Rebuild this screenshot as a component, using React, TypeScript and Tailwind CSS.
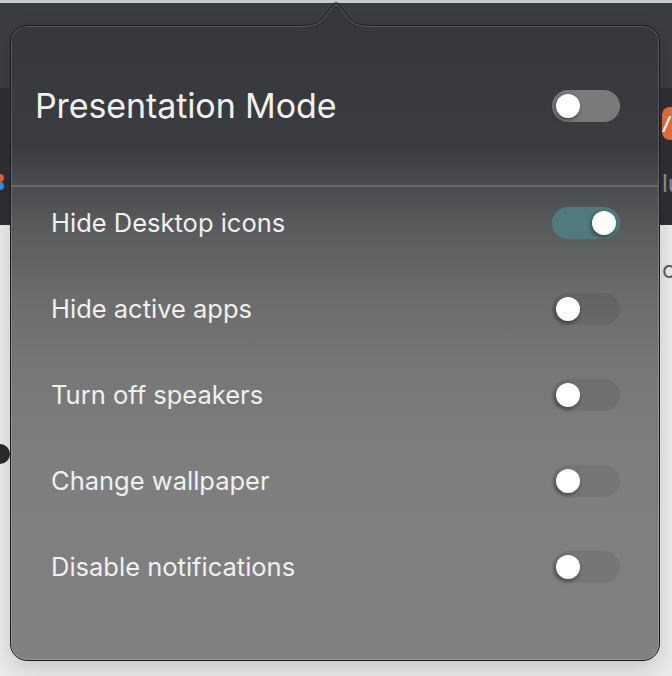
import React, { useState } from 'react';

// One settings row in the popover
interface Option {
  label: string;
  on: boolean;
}

const initialOptions: Option[] = [
  { label: 'Hide Desktop icons', on: true },
  { label: 'Hide active apps', on: false },
  { label: 'Turn off speakers', on: false },
  { label: 'Change wallpaper', on: false },
  { label: 'Disable notifications', on: false },
];

const Toggle = ({ on, header, onClick }: { on: boolean; header?: boolean; onClick: () => void }) => {
  const track = on ? 'bg-[#4f7b7e]' : header ? 'bg-[#7a7a7a]' : 'bg-black/[0.07]';
  return (
    <button
      onClick={onClick}
      className={`flex items-center w-[68px] h-[32px] rounded-full px-[4px] shrink-0 ${track} ${on ? 'justify-end' : 'justify-start'}`}
    >
      <span className="w-[24px] h-[24px] rounded-full bg-white shadow-[-1px_2px_4px_rgba(0,0,0,0.45)]" />
    </button>
  );
};

const App = () => {
  const [presentation, setPresentation] = useState(false);
  const [options, setOptions] = useState<Option[]>(initialOptions);

  const flip = (index: number) => {
    setOptions(options.map((o, i) => (i === index ? { ...o, on: !o.on } : o)));
  };

  return (
    <div className="relative w-[672px] h-[676px] overflow-hidden bg-[#ececec] font-['Inter','Noto_Sans',sans-serif]">
      {/* window behind the popover */}
      <div className="h-[3px] bg-[#c6ccd3]" />
      <div className="h-[85px] bg-[#3c3d40]" />
      <div className="h-[137px] bg-[#2f3033]" />

      {/* bits of the window peeking out at the edges */}
      <div className="absolute left-[-6px] top-[174px] w-[10px] h-[8px] rounded-full bg-[#e0603c]" />
      <div className="absolute left-[-6px] top-[182px] w-[10px] h-[8px] rounded-full bg-[#3a8fe0]" />
      <div className="absolute left-[-12px] top-[444px] w-[22px] h-[20px] rounded-full bg-[#2a2a2a]" />
      <div className="absolute left-[662px] top-[107px] w-[30px] h-[33px] rounded-[8px] bg-[#e2703d] flex items-center justify-start pl-[1px]">
        <span className="text-white text-[18px] font-bold italic leading-none">/</span>
      </div>
      <div className="absolute left-[662px] top-[172px] text-[24px] text-[#8f9093] leading-none">lu</div>
      <div className="absolute left-[662px] top-[258px] text-[24px] text-[#5f5f5f] leading-none">c</div>

      {/* popover arrow */}
      <svg className="absolute left-[296px] top-0 z-20" width="80" height="29" viewBox="0 0 80 29">
        <path d="M0 25.5 C18 25.5 22 24 28 16 L37 4.5 Q40 1 43 4.5 L52 16 C58 24 62 25.5 80 25.5 L80 29 L0 29 Z" fill="#36373a" />
        <path d="M0 25.5 C18 25.5 22 24 28 16 L37 4.5 Q40 1 43 4.5 L52 16 C58 24 62 25.5 80 25.5" fill="none" stroke="#1c1c1e" strokeWidth="1" />
        <path d="M0 26.5 C18 26.5 22.5 25 28.8 16.8 L37.8 5.5 Q40 2.6 42.2 5.5 L51.2 16.8 C57.5 25 62 26.5 80 26.5" fill="none" stroke="#58595c" strokeWidth="1" />
      </svg>

      {/* popover */}
      <div className="absolute left-[10px] top-[25px] z-10 w-[650px] h-[636px] rounded-[17px] border border-[#1c1c1e] shadow-[inset_0_0_0_1px_rgba(255,255,255,0.16),0_8px_22px_rgba(0,0,0,0.16)] bg-[linear-gradient(180deg,#36373a_0%,#3b3c40_19%,#4a4b4e_25%,#5c5d5e_33%,#6c6c6d_43%,#777777_55%,#7e7e7e_70%,#818181_100%)] flex flex-col">
        <div className="h-[159px] flex items-center justify-between pl-[24px] pr-[39px]">
          <span className="text-[34px] text-[#f1f1f1] tracking-[-0.1px]">Presentation Mode</span>
          <Toggle header on={presentation} onClick={() => setPresentation(!presentation)} />
        </div>
        <div className="h-[2px] bg-[#69696b]" />
        <div className="flex flex-col gap-[54px] pt-[20px] pl-[40px] pr-[39px]">
          {options.map((o, i) => (
            <div key={o.label} className="h-[32px] flex items-center justify-between">
              <span className="text-[25.5px] text-[#f0f0f0]">{o.label}</span>
              <Toggle on={o.on} onClick={() => flip(i)} />
            </div>
          ))}
        </div>
      </div>
    </div>
  );
};

export default App;
